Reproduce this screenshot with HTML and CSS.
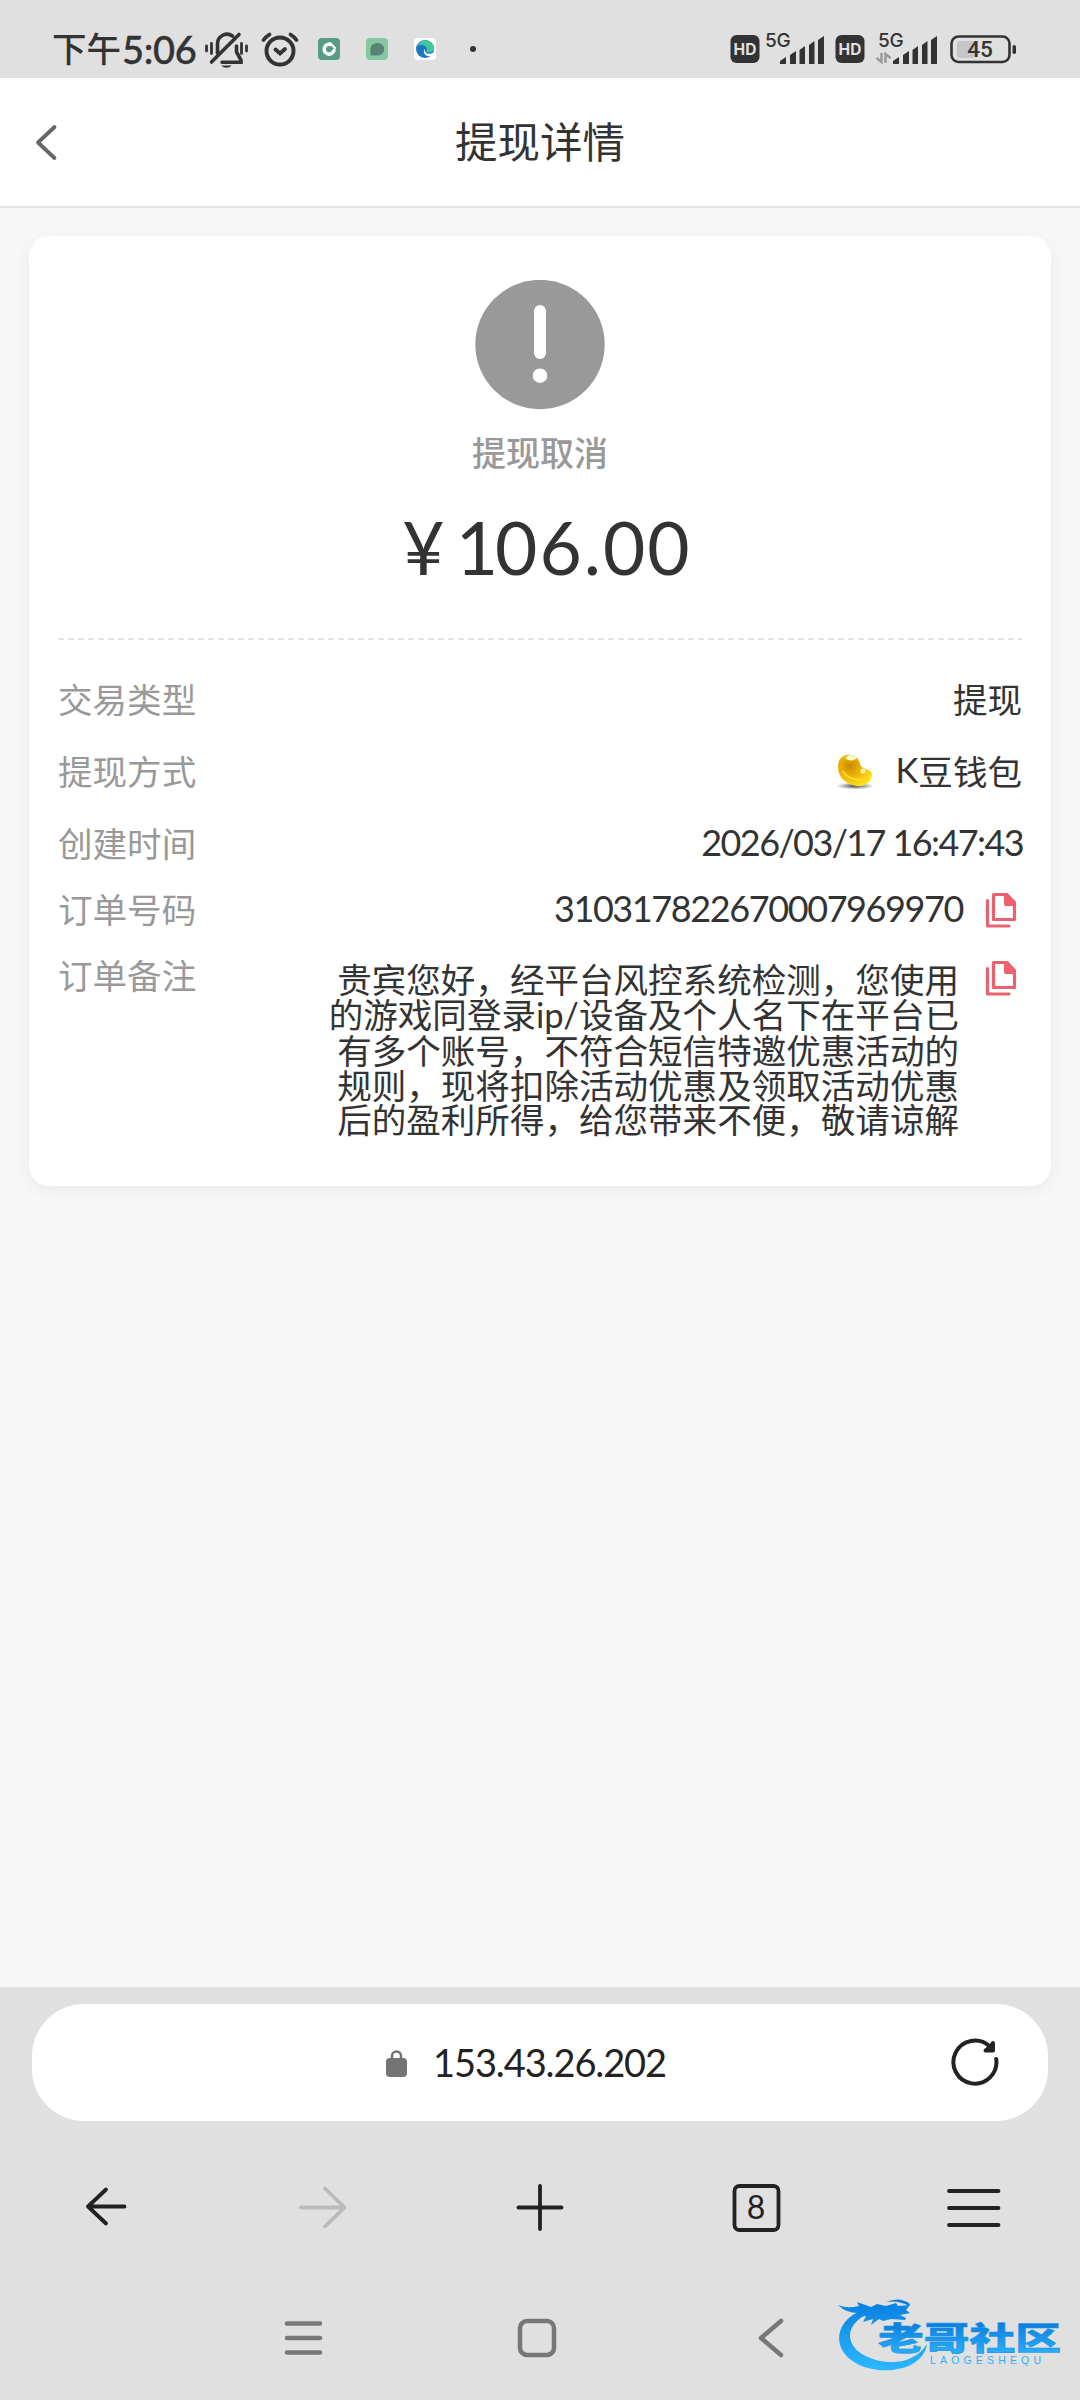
FILE: index.html
```html
<!DOCTYPE html>
<html lang="zh-CN">
<head>
<meta charset="utf-8">
<title>提现详情</title>
<link rel="stylesheet" href="styles.css">
</head>
<body>
<div class="screen">
  <header class="status">
    <span class="status-cn">下午</span><span class="status-time">5:06</span>
    <svg class="status-left" width="290" height="78" viewBox="200 0 290 78" fill="none" stroke="#333" stroke-width="3.6" stroke-linecap="round">
      <path d="M211.500 62 239 34.500M217.500 53V43.500a9.500 9.500 0 0 1 15-7.500M236.500 46v6l4.500 8v2.200H222"/>
      <path d="M206.500 46v5M211.500 43.500v10M241.500 43.500v10M246.500 46v5" stroke-width="2.800"/>
      <path d="M221 65.500h11q-5.500 4.500-11 0z" fill="#333" stroke="none"/>
      <circle cx="280" cy="51" r="13.500" stroke-width="4"/>
      <path d="M275.500 49.500l4.500 4 5-4.500M263.500 40q2-3 6-5.500M290.500 34.500q4 2.500 6 5.500" stroke-width="3.800"/>
      <rect x="318" y="38" width="22" height="22" rx="4" fill="#579d83" stroke="none"/>
      <path d="M331 44.500a5 5 0 1 0 3 6" stroke="#fff" stroke-width="3.400"/><path d="M330 43l5 5" stroke="#fff" stroke-width="2"/>
      <rect x="366" y="38" width="22" height="22" rx="4" fill="#86c7a2" stroke="none"/>
      <path d="M370.500 55.500V49a6.500 6 0 0 1 7-6c9 0 9 12.500 0 12.500z" fill="#568374" stroke="none"/>
      <rect x="414" y="38" width="22" height="22" rx="4" fill="#fff" stroke="none"/>
      <circle cx="425" cy="49" r="9" fill="#1977c5" stroke="none"/>
      <path d="M417 46c4-9 17-7 17 2 0 5-5 5-8 4 2-3 0-7-4-7-2 0-4 0-5 1z" fill="#43c69b" stroke="none"/>
      <path d="M425 49c-1 4 3 6 8 4l2 2-4 1c-6 1-9-4-6-7z" fill="#fff" stroke="none"/>
      <circle cx="473" cy="49" r="3" fill="#333" stroke="none"/>
    </svg>
    <svg class="status-right" width="290" height="78" viewBox="728 0 290 78" fill="#333">
      <rect x="730.500" y="35" width="29" height="28" rx="6"/>
      <text class="hd" x="745" y="55">HD</text>
      <text class="net" x="765" y="47">5G</text>
      <g id="bars"><path d="M780 64v-3l6-4v7zM790 64v-9l6-4v13zM799.500 64V50l5.500-4v18zM809 64V45l5.500-4v23zM818 64V40l6-4v28z"/></g>
      <rect x="835.500" y="35" width="29" height="28" rx="6"/>
      <text class="hd" x="850" y="55">HD</text>
      <text class="net" x="878" y="47">5G</text>
      <use href="#bars" x="113"/>
      <path d="M881.500 53v9l-5-4M885.500 63v-9l5 4" fill="none" stroke="#999" stroke-width="2.500"/>
      <rect x="957" y="41" width="18" height="17" rx="3" fill="#c6c6c6"/>
      <rect x="951.500" y="36.500" width="58" height="25.500" rx="7" fill="none" stroke="#333" stroke-width="2.600"/>
      <rect x="1012.500" y="45" width="3.500" height="9" rx="1.700"/>
      <text class="batt" x="980" y="57">45</text>
    </svg>
  </header>

  <nav class="titlebar">
    <svg class="back" width="30" height="40" viewBox="0 0 30 40" fill="none" stroke="#666" stroke-width="3.800" stroke-linecap="round" stroke-linejoin="round"><path d="M21.500 5 5 20.500 21.500 36"/></svg>
    <h1>提现详情</h1>
  </nav>

  <main>
    <section class="card">
      <svg class="alert" width="130" height="130" viewBox="0 0 130 130"><circle cx="65" cy="64.500" r="64.700" fill="#999"/><rect x="59" y="25" width="12" height="54" rx="6" fill="#fff"/><circle cx="65" cy="95.700" r="7.300" fill="#fff"/></svg>
      <p class="state">提现取消</p>
      <p class="amount"><span class="yen">¥</span><span class="sum"><span class="one">1</span>06.00</span></p>
      <div class="rule"></div>
      <dl class="rows">
        <div class="row"><dt>交易类型</dt><dd>提现</dd></div>
        <div class="row"><dt>提现方式</dt><dd>
          <svg class="bean" width="40" height="40" viewBox="0 0 40 40">
            <defs><radialGradient id="gold" cx=".35" cy=".35" r=".75"><stop offset="0" stop-color="#c98c00"/><stop offset=".5" stop-color="#eeb808"/><stop offset="1" stop-color="#ffe81c"/></radialGradient>
            <radialGradient id="shade"><stop offset="0" stop-color="#444"/><stop offset="1" stop-color="#555" stop-opacity="0"/></radialGradient></defs>
            <ellipse cx="20" cy="36" rx="19" ry="3.500" fill="url(#shade)"/>
            <path d="M3 16C3 2 23 1 25 14c1 6 11 4 12 10 0 11-12 15-22 10C6 30 3 24 3 16z" fill="url(#gold)"/>
            <path d="M10 8q6 5 12 0-6-6-12 0z" fill="#fff9c5"/><circle cx="28" cy="21" r="2.500" fill="#fff5ae"/><path d="M8 21c4 8 14 10 23 8" fill="none" stroke="#ffd92c" stroke-width="2"/>
          </svg><span class="num">K</span>豆钱包</dd></div>
        <div class="row"><dt>创建时间</dt><dd class="num date">2026/03/17 16:47:43</dd></div>
        <div class="row tight"><dt>订单号码</dt><dd><span class="num order">310317822670007969970</span>
          <svg class="copy" width="32" height="36" viewBox="0 0 32 36"><g fill="none" stroke="#e8636e" stroke-width="3.200" stroke-linejoin="round"><path d="M8.500 2.500h13L29.500 11v16.500h-21z"/><path d="M2.500 8.500v25.500H24" stroke-linecap="round"/></g><path d="M19 1.500h4l7.500 8V14H21q-2 0-2-2z" fill="#f0606c"/></svg></dd></div>
        <div class="row note"><dt>订单备注</dt><dd><span class="remark">贵宾您好，经平台风控系统检测，您使用<br>的游戏同登录<span class="num">ip/</span>设备及个人名下在平台已<br>有多个账号，不符合短信特邀优惠活动的<br>规则，现将扣除活动优惠及领取活动优惠<br>后的盈利所得，给您带来不便，敬请谅解</span>
          <svg class="copy" width="32" height="36" viewBox="0 0 32 36"><g fill="none" stroke="#e8636e" stroke-width="3.200" stroke-linejoin="round"><path d="M8.500 2.500h13L29.500 11v16.500h-21z"/><path d="M2.500 8.500v25.500H24" stroke-linecap="round"/></g><path d="M19 1.500h4l7.500 8V14H21q-2 0-2-2z" fill="#f0606c"/></svg></dd></div>
      </dl>
    </section>
  </main>

  <footer>
    <div class="address">
      <svg class="lock" width="21" height="28" viewBox="0 0 21 28"><path d="M6 11V7a4.500 4.500 0 0 1 9 0v4" fill="none" stroke="#737373" stroke-width="2.500"/><rect y="9" width="21" height="19" rx="4" fill="#737373"/></svg>
      <span class="host">153.43.26.202</span>
      <svg class="reload" width="52" height="52" viewBox="0 0 52 52" fill="none" stroke="#222" stroke-width="4" stroke-linecap="round" stroke-linejoin="round"><path d="M48.200 22a21.500 21.500 0 1 1-6.500-12.500"/><path d="M45 6v7.500H37.500L42 10z"/></svg>
    </div>
    <svg class="tools" width="1080" height="60" viewBox="0 2178 1080 60" fill="none" stroke="#222" stroke-width="3.800" stroke-linecap="round" stroke-linejoin="round">
      <path d="M124.500 2206.500H88M106 2189.500l-18 17 18 17"/>
      <path d="M301 2207.500h43M325 2188.500l19.500 19-19.500 19" stroke="#bbb"/>
      <path d="M518.500 2207.500h43M540 2186v43"/>
      <rect x="734.500" y="2186" width="44" height="44" rx="5"/>
      <text class="tabs" x="756" y="2218.500">8</text>
      <path d="M949 2191h49.500M949 2208h49.500M949 2225h49.500"/>
    </svg>
    <svg class="system" width="1080" height="102" viewBox="0 2288 1080 102" fill="none" stroke="#777" stroke-width="4.500" stroke-linecap="round" stroke-linejoin="round">
      <path d="M287 2323.500h33M287 2338h33M287 2352.500h33"/>
      <rect x="520" y="2321" width="34" height="34" rx="7"/>
      <path d="M781 2321l-20 17 20 17"/>
      <defs><linearGradient id="wave" x1="0" y1="2300" x2="0" y2="2370" gradientUnits="userSpaceOnUse"><stop offset="0" stop-color="#087ee0"/><stop offset="1" stop-color="#2bb8ff"/></linearGradient>
      <linearGradient id="wave-text" x1="0" y1="2325" x2="0" y2="2353" gradientUnits="userSpaceOnUse"><stop offset="0" stop-color="#0d80dd"/><stop offset="1" stop-color="#29aef8"/></linearGradient></defs>
      <g fill="url(#wave)" stroke="none">
        <path d="M866 2309C831 2319 829 2357 868 2368c26 7 56-2 59-24-9 15-29 22-51 16-33-9-34-36-6-47z"/>
        <path d="M838 2305q9 4 21 1l-2-4 14 5 6-3 9 2 10-3 2 3 12-1-4 5 4 3-10 2 6 3-1 2-14-1-8 2-4-2-8 6 2-6-10 3 3-6-9 1 4-4q-14 1-23-8z"/>
        <path d="M886 2302q14-6 24 2l-1 2q-10-6-23-4z"/>
        <text class="brand" x="878" y="2350" textLength="183" lengthAdjust="spacingAndGlyphs">老哥社区</text>
        <text class="brand-sub" x="930" y="2364" textLength="111">LAOGESHEQU</text>
      </g>
    </svg>
  </footer>
</div>
</body>
</html>
```
FILE: styles.css
```css
* { box-sizing: border-box; margin: 0; padding: 0; }
body { background: #f7f7f7; color: #333; font-family: "Noto Sans CJK SC", sans-serif; font-size: 34.56px; }
svg { display: block; flex: none; }
.screen { width: 1080px; height: 2400px; display: flex; flex-direction: column; }

.status { height: 78px; background: #e0e0e0; display: flex; align-items: center; padding: 0 62px 0 52px; }
.status-cn { font-size: 34.5px; font-weight: 500; padding-top: 17px; height: 78px; line-height: 60px; width: 70px; }
.status-time { font-family: Lato, sans-serif; font-size: 38px; font-weight: 500; line-height: 60px; padding-top: 19px; height: 78px; width: 78px; letter-spacing: -.3px; -webkit-text-stroke: .4px #333; }
.status-left { margin-right: auto; }
.hd { font: 700 15.5px Inter, sans-serif; fill: #e0e0e0; text-anchor: middle; }
.net { font: 500 19px Inter, sans-serif; letter-spacing: -.3px; }
.batt { font: 500 22.5px Roboto, sans-serif; text-anchor: middle; }

.titlebar { height: 130px; background: #fff; border-bottom: 2px solid #e3e3e3; display: grid; grid-template-columns: 100px 1fr 100px; align-items: center; }
.back { margin: -1px 0 0 33px; }
h1 { font-size: 42.5px; font-weight: 400; line-height: 60px; text-align: center; padding-bottom: 5px; }

main { flex: 1; padding: 28px 29px; }
.card { height: 950px; background: #fff; border-radius: 20px; padding: 44px 29px; box-shadow: 0 4px 16px rgba(0,0,0,.06); display: flex; flex-direction: column; align-items: center; }
.state { margin-top: 17px; color: #999; font-weight: 500; line-height: 50px; font-size: 34px; }
.amount { font-family: Lato, sans-serif; font-size: 73px; line-height: 90px; margin-top: 25px; display: flex; gap: 14px; padding-left: 14px; }
.sum { letter-spacing: 2px; }
.one { letter-spacing: -3px; }
.yen { letter-spacing: -3px; }
.rule { width: 964px; height: 2px; margin-top: 46px; background: repeating-linear-gradient(90deg, #e2e2e2 0 6px, transparent 6px 10px); }
.rows { width: 100%; padding-top: 22px; }
.row { height: 72px; display: flex; justify-content: space-between; align-items: center; }
.row.tight { height: 60px; }
dt { color: #999; line-height: 50px; }
dd { display: flex; align-items: center; line-height: 50px; }
.num { font-family: Lato, sans-serif; }
.bean { margin-right: 20px; }
.date { font-size: 36px; letter-spacing: -1.6px; margin-right: -1px; }
.order { font-size: 36px; letter-spacing: -1.4px; margin-right: 22px; }
.copy { margin-right: 5px; }
.row.tight .copy { margin-top: 3px; }
.note { height: auto; align-items: flex-start; padding-top: 11px; }
.note dd { align-items: flex-start; }
.note .copy { margin: 11px 5px 0 26px; }
.remark { text-align: right; line-height: 34.6px; padding-top: 12px; }

footer { height: 413px; background: #e0e0e0; padding-top: 17px; }
.address { height: 117px; margin: 0 32px; background: #fff; border-radius: 52px; display: flex; align-items: center; padding: 0 48px 0 354px; }
.host { font-family: Lato, sans-serif; font-size: 38px; line-height: 60px; letter-spacing: -1.1px; color: #222; margin: -1px 0 0 26px; }
.reload { margin-left: auto; }
.tools { margin-top: 57px; }
.system { margin-top: 50px; }
.tabs { font: 400 32px Lato, sans-serif; fill: #222; stroke: none; text-anchor: middle; }
.brand { font: 900 32px "Noto Sans CJK SC", sans-serif; fill: url(#wave-text); stroke: #1a93ea; stroke-width: .6px; }
.brand-sub { font: 400 10.5px "Liberation Sans", sans-serif; }
```
